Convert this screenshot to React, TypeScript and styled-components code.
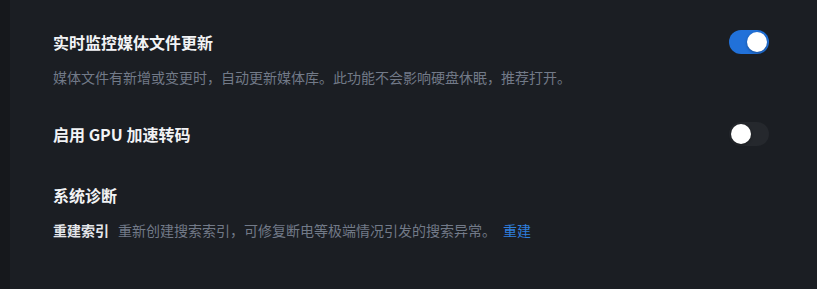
import React, { useState } from "react";
import styled, { createGlobalStyle } from "styled-components";

const GlobalStyle = createGlobalStyle`
  html, body {
    margin: 0;
    padding: 0;
    background: #1b1e23;
  }
  body {
    font-family: "Noto Sans CJK SC", "Noto Sans", sans-serif;
    -webkit-font-smoothing: antialiased;
  }
  * { box-sizing: border-box; }
`;

const Shell = styled.div`
  display: flex;
  width: 817px;
  height: 289px;
  background: #1b1e23;
  overflow: hidden;
`;

const Strip = styled.div`
  width: 10px;
  flex: none;
  background: #16181c;
`;

const Main = styled.main`
  flex: 1;
  display: flex;
  flex-direction: column;
  padding: 30px 48px 0 43px;
`;

const Setting = styled.section<{ $gap?: number }>`
  display: flex;
  flex-direction: column;
  margin-bottom: ${(p) => p.$gap ?? 0}px;
`;

const Row = styled.div`
  display: flex;
  align-items: center;
  justify-content: space-between;
  height: 24px;
`;

const Title = styled.h3`
  margin: 0;
  font-size: 16px;
  line-height: 24px;
  font-weight: 700;
  color: #f2f3f5;
`;

const Desc = styled.p`
  margin: 13px 0 0;
  font-size: 14px;
  line-height: 20px;
  color: #727a88;
`;

const Track = styled.button<{ $on: boolean }>`
  position: relative;
  width: 40px;
  height: 24px;
  border: none;
  padding: 0;
  border-radius: 12px;
  cursor: pointer;
  background: ${(p) => (p.$on ? "#2171d9" : "#25282d")};
  flex: none;
`;

const Knob = styled.span<{ $on: boolean }>`
  position: absolute;
  top: 2px;
  left: ${(p) => (p.$on ? "18px" : "2px")};
  width: 20px;
  height: 20px;
  border-radius: 50%;
  background: #ffffff;
  box-shadow: 0 1px 3px rgba(0, 0, 0, 0.35);
  transition: left 0.15s;
`;

const ActionRow = styled.div`
  display: flex;
  align-items: center;
  margin-top: 13px;
  font-size: 14px;
  line-height: 20px;
`;

const ActionLabel = styled.span`
  font-weight: 700;
  color: #e4e6ea;
  margin-right: 9px;
`;

const ActionDesc = styled.span`
  color: #727a88;
  margin-right: 7px;
`;

const Link = styled.a`
  color: #2f7fdd;
  text-decoration: none;
  cursor: pointer;
`;

function Toggle({ initial }: { initial: boolean }) {
  const [on, setOn] = useState(initial);
  return (
    <Track $on={on} onClick={() => setOn(!on)} aria-pressed={on}>
      <Knob $on={on} />
    </Track>
  );
}

export default function App() {
  return (
    <>
      <GlobalStyle />
      <Shell>
        <Strip />
        <Main>
          <Setting $gap={35}>
            <Row>
              <Title>实时监控媒体文件更新</Title>
              <Toggle initial={true} />
            </Row>
            <Desc>媒体文件有新增或变更时，自动更新媒体库。此功能不会影响硬盘休眠，推荐打开。</Desc>
          </Setting>
          <Setting $gap={37}>
            <Row>
              <Title>启用 GPU 加速转码</Title>
              <Toggle initial={false} />
            </Row>
          </Setting>
          <Setting>
            <Row>
              <Title>系统诊断</Title>
            </Row>
            <ActionRow>
              <ActionLabel>重建索引</ActionLabel>
              <ActionDesc>重新创建搜索索引，可修复断电等极端情况引发的搜索异常。</ActionDesc>
              <Link>重建</Link>
            </ActionRow>
          </Setting>
        </Main>
      </Shell>
    </>
  );
}
